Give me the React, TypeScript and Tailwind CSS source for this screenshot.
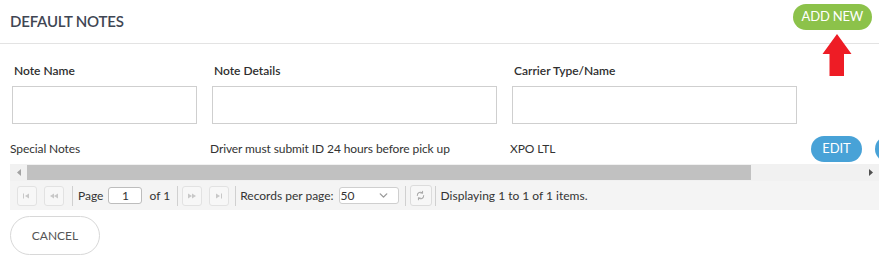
import { ChevronDown } from "lucide-react";

function PagerButton({ kind }: { kind: "first" | "prev" | "next" | "last" }) {
  return (
    <button className="flex h-5 w-5 shrink-0 items-center justify-center rounded-[3px] border border-[#e2e2e2] bg-[#f7f7f7]">
      <svg width="10" height="6" viewBox="0 0 10 6" className="text-[#c8c8c8]">
        {kind === "first" && (
          <>
            <rect x="1" y="0.5" width="1" height="5" fill="currentColor" />
            <path d="M3 3 L7 0.5 V5.5 Z" fill="currentColor" />
          </>
        )}
        {kind === "prev" && (
          <>
            <path d="M1 3 L5 0.5 V5.5 Z" fill="currentColor" />
            <path d="M5 3 L9 0.5 V5.5 Z" fill="currentColor" />
          </>
        )}
        {kind === "next" && (
          <>
            <path d="M1 0.5 L5 3 L1 5.5 Z" fill="currentColor" />
            <path d="M5 0.5 L9 3 L5 5.5 Z" fill="currentColor" />
          </>
        )}
        {kind === "last" && (
          <>
            <path d="M2 0.5 L6 3 L2 5.5 Z" fill="currentColor" />
            <rect x="7" y="0.5" width="1" height="5" fill="currentColor" />
          </>
        )}
      </svg>
    </button>
  );
}

function Sep() {
  return <div className="mx-[3px] h-5 w-px shrink-0 bg-[#d0d0d0]" />;
}

export default function App() {
  return (
    <div className="relative h-[261px] w-[879px] overflow-hidden bg-white font-['Lato',sans-serif] text-[#333]">
      {/* header */}
      <div className="flex h-[44px] items-center justify-between border-b border-[#e3e3e3] pl-[10px] pr-[7px]">
        <h1 className="text-[15px] font-semibold tracking-[-0.2px] text-[#3f4653]">DEFAULT NOTES</h1>
        <button className="-mt-[9px] h-[26px] rounded-full bg-[#8cc24a] px-[9px] text-[13px] tracking-[-0.2px] text-white">
          ADD NEW
        </button>
      </div>

      {/* red arrow */}
      <svg className="absolute left-[822px] top-[34px]" width="30" height="43" viewBox="0 0 30 43">
        <path d="M15 0 L29.5 20 H22 V42 H7.5 V20 H0.5 Z" fill="#ee1c25" />
      </svg>

      {/* form */}
      <div className="flex gap-[15px] pl-[12px] pt-[20px]">
        <div className="w-[185px]">
          <label className="block pl-[2px] text-[12px] font-semibold leading-[14px] text-[#2f2f2f]">Note Name</label>
          <input className="mt-[8px] h-[38px] w-full border border-[#cfcfcf] outline-none" />
        </div>
        <div className="w-[285px]">
          <label className="block pl-[2px] text-[12px] font-semibold leading-[14px] text-[#2f2f2f]">Note Details</label>
          <input className="mt-[8px] h-[38px] w-full border border-[#cfcfcf] outline-none" />
        </div>
        <div className="w-[285px]">
          <label className="block pl-[2px] text-[12px] font-semibold leading-[14px] text-[#2f2f2f]">Carrier Type/Name</label>
          <input className="mt-[8px] h-[38px] w-full border border-[#cfcfcf] outline-none" />
        </div>
      </div>

      {/* grid */}
      <div className="ml-[10px] mt-[10px] w-[869px]">
        <div className="flex h-[30px] items-center text-[12px] tracking-[-0.1px] text-[#333]">
          <div className="w-[200px] shrink-0">Special Notes</div>
          <div className="w-[300px] shrink-0">Driver must submit ID 24 hours before pick up</div>
          <div className="w-[301px] shrink-0">XPO LTL</div>
          <button className="h-[26px] w-[51px] shrink-0 rounded-full bg-[#48a2d7] text-[13px] text-white">EDIT</button>
          <button className="ml-[13px] h-[26px] w-[51px] shrink-0 rounded-full bg-[#48a2d7]" />
        </div>

        {/* scrollbar */}
        <div className="flex h-[17px] w-[869px] items-center bg-[#f1f1f1]">
          <div className="flex w-[17px] justify-center">
            <svg width="4" height="7" viewBox="0 0 4 7"><path d="M4 0 L0 3.5 L4 7 Z" fill="#a3a3a3" /></svg>
          </div>
          <div className="h-[15px] w-[724px] bg-[#c1c1c1]" />
          <div className="flex-1" />
          <div className="flex w-[17px] justify-center">
            <svg width="4" height="7" viewBox="0 0 4 7"><path d="M0 0 L4 3.5 L0 7 Z" fill="#505050" /></svg>
          </div>
        </div>

        {/* pager */}
        <div className="flex h-[29px] w-[869px] items-center bg-[#f4f4f4] pl-[7px] text-[12px] text-[#333]">
          <PagerButton kind="first" />
          <div className="w-[7px]" />
          <PagerButton kind="prev" />
          <div className="w-[5px]" />
          <Sep />
          <span className="ml-[2px]">Page</span>
          <div className="ml-[5px] flex h-[17px] w-[34px] items-center justify-center rounded-[3px] border border-[#bdbdbd] bg-white text-[12px]">1</div>
          <span className="ml-[7px]">of 1</span>
          <div className="w-[4px]" />
          <Sep />
          <div className="w-[1px]" />
          <PagerButton kind="next" />
          <div className="w-[7px]" />
          <PagerButton kind="last" />
          <div className="w-[3px]" />
          <Sep />
          <span className="ml-[1px]">Records per page:</span>
          <div className="ml-[5px] flex h-[17px] w-[60px] items-center justify-between rounded-[3px] border border-[#cfcfcf] bg-white pl-[1px] pr-[8px]">
            <span>50</span>
            <ChevronDown size={13} strokeWidth={2.5} className="text-[#9a9a9a]" />
          </div>
          <div className="w-[3px]" />
          <Sep />
          <button className="ml-[1px] flex h-[21px] w-[22px] items-center justify-center rounded-[3px] border border-[#dcdcdc] bg-[#f7f7f7]">
            <svg width="11" height="11" viewBox="0 0 24 24" fill="none" stroke="#a8a8a8" strokeWidth="2.2" strokeLinecap="round">
              <path d="M19 12a7 7 0 0 1-11.5 5.4" />
              <path d="M5 12a7 7 0 0 1 11.5-5.4" />
              <path d="M16.5 2.5v4h-4" />
              <path d="M7.5 21.5v-4h4" />
            </svg>
          </button>
          <Sep />
          <span className="ml-[2px]">Displaying 1 to 1 of 1 items.</span>
        </div>
      </div>

      {/* footer */}
      <div className="pl-[10px] pt-[6px]">
        <button className="h-[39px] w-[90px] rounded-full border border-[#d8d8d8] bg-white text-[12px] text-[#555]">
          CANCEL
        </button>
      </div>
    </div>
  );
}
